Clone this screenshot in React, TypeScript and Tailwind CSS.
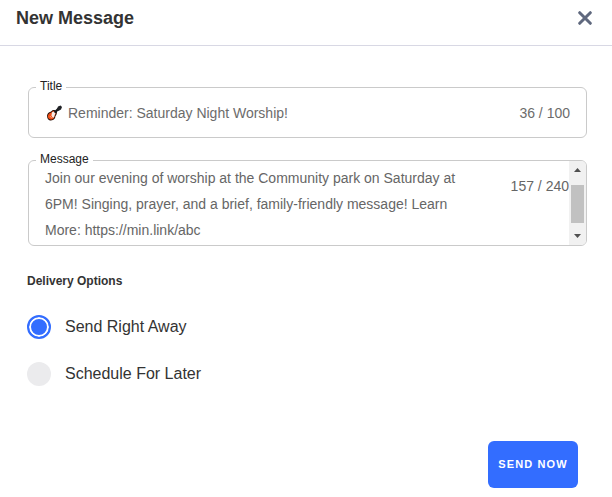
import { useState, type FormEvent, type ReactNode } from "react";

type FieldProps = {
  id: string;
  label: string;
  children: ReactNode;
};

function Field({ id, label, children }: FieldProps) {
  return (
    <fieldset className="min-w-0 rounded-md border border-[#cacaca]">
      <legend className="ml-[7px] flex h-px items-center px-1 text-xs text-[#222222]">
        <label htmlFor={id} className="pb-1">
          {label}
        </label>
      </legend>
      {children}
    </fieldset>
  );
}

function GuitarIcon() {
  return (
    <svg viewBox="0 0 16 16" className="size-4 shrink-0" aria-hidden="true">
      <path
        d="M9.4 5.4C7.8 4.8 6.2 5 5.4 6.2C4.4 7 3.2 7 2.2 8C.6 9.6.8 12.6 2 14.2C3.6 16.1 7 15.8 8.5 13.8C9.6 12.4 9 11.4 9.9 10.4C10.6 9.4 11.2 8.2 10.8 6.8Z"
        fill="#2a1008"
      />
      <path
        d="M8.6 6.2C7.2 5.8 6.4 6.2 5.9 7.1C5.2 8 3.8 7.9 2.9 8.8C1.5 10.4 1.5 12.4 2.6 13.6C4 15.1 6.5 14.8 7.7 13.3C8.6 12 8.3 10.9 9.1 9.8C9.8 8.9 10.2 8 9.9 7.2Z"
        fill="#f04e16"
      />
      <path d="M6 7.2L8.4 6.6L9.4 8.2L8.6 10.2L8 12.6L6.6 12.4L5.4 10.4Z" fill="#f8ebe6" />
      <path d="M8.6 7.6L12.8 3.4" stroke="#17191d" strokeWidth="2.2" />
      <path d="M11 4.6L12 1.4L14.6.4L16 2L15 4.4L12.4 6Z" fill="#202226" />
      <path d="M4.2 11.4L5.4 12.6" stroke="#fff" strokeWidth=".8" />
    </svg>
  );
}

function ScrollTrack() {
  return (
    <div
      className="flex w-[17px] shrink-0 flex-col items-center rounded-r-[5px] bg-[#f1f1f1]"
      aria-hidden="true"
    >
      <svg viewBox="0 0 17 24" className="h-6 w-[17px]" fill="#505050">
        <path d="M5 11L8.5 7L12 11Z" />
      </svg>
      <div className="h-[38px] w-[13px] bg-[#c1c1c1]" />
      <svg viewBox="0 0 17 17" className="mt-auto h-[17px] w-[17px]" fill="#505050">
        <path d="M5 6L8.5 10L12 6Z" />
      </svg>
    </div>
  );
}

const options = [
  { value: "now", label: "Send Right Away" },
  { value: "later", label: "Schedule For Later" },
];

export default function App() {
  const [title, setTitle] = useState("Reminder: Saturday Night Worship!");
  const [message, setMessage] = useState(
    "Join our evening of worship at the Community park on Saturday at 6PM! Singing, prayer, and a brief, family-friendly message! Learn More: https://min.link/abc"
  );
  const [delivery, setDelivery] = useState("now");

  const handleSubmit = (e: FormEvent) => {
    e.preventDefault();
  };

  return (
    <div className="bg-white font-['Liberation_Sans',Arial,sans-serif] text-[#333333]">
      <header className="flex h-[46px] items-center justify-between border-b border-[#d8d8e4] px-4 pb-2.5">
        <h1 className="text-lg font-bold">New Message</h1>
        <button type="button" aria-label="Close" className="p-1">
          <svg
            viewBox="0 0 14 14"
            className="size-[14px]"
            stroke="#5f687e"
            strokeWidth="3"
            strokeLinecap="round"
          >
            <path d="M1.7 1.7L12.3 12.3M12.3 1.7L1.7 12.3" />
          </svg>
        </button>
      </header>

      <form onSubmit={handleSubmit} className="pt-[41px] pr-[25px] pl-7">
        <div className="flex flex-col gap-[22px]">
          <Field id="title" label="Title">
            <div className="flex h-[49px] items-center pr-4 pl-[17px] text-sm text-[#6c6c6c]">
              <GuitarIcon />
              <input
                id="title"
                type="text"
                value={title}
                onChange={(e) => setTitle(e.target.value)}
                className="ml-1.5 min-w-0 flex-1 outline-none"
              />
              <span>36 / 100</span>
            </div>
          </Field>

          <Field id="message" label="Message">
            <div className="flex h-[84px] text-sm text-[#666666]">
              <textarea
                id="message"
                value={message}
                onChange={(e) => setMessage(e.target.value)}
                className="min-w-0 flex-1 resize-none overflow-hidden pt-1 pr-6 pl-4 leading-[26px] outline-none"
              />
              <span className="shrink-0 pt-[15px]">157 / 240</span>
              <ScrollTrack />
            </div>
          </Field>
        </div>

        <fieldset className="-ml-px mt-[27px]">
          <legend className="text-xs font-bold">Delivery Options</legend>
          <div className="flex flex-col gap-[23px] pt-[26px]">
            {options.map((option) => (
              <label key={option.value} className="flex items-center gap-[14px] text-base">
                <input
                  type="radio"
                  name="delivery"
                  value={option.value}
                  checked={delivery === option.value}
                  onChange={() => setDelivery(option.value)}
                  className="size-6 appearance-none rounded-full bg-[#ebebed] checked:border-2 checked:border-[#336dff] checked:bg-[#336dff] checked:shadow-[inset_0_0_0_2px_#ffffff]"
                />
                {option.label}
              </label>
            ))}
          </div>
        </fieldset>

        <div className="flex justify-end pt-[55px] pr-[9px] pb-[9px]">
          <button
            type="submit"
            className="h-[47px] w-[90px] rounded-md bg-[#336dff] text-[11px] font-bold tracking-widest text-white"
          >
            SEND NOW
          </button>
        </div>
      </form>
    </div>
  );
}
